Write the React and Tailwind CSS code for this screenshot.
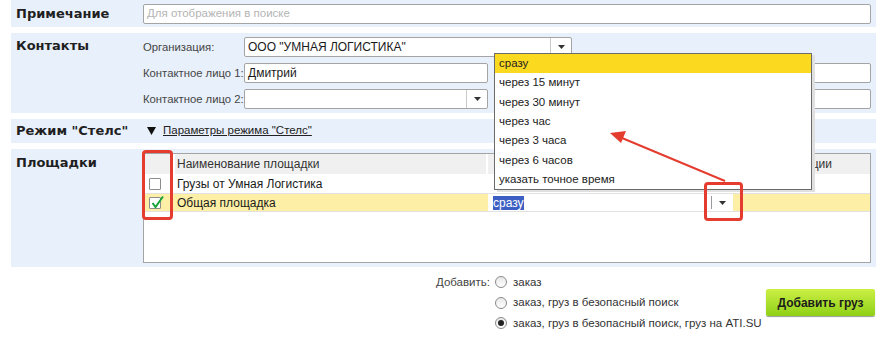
const ROW_BG = 'bg-[#e8f0fb]'

const OPTIONS = [
  'сразу',
  'через 15 минут',
  'через 30 минут',
  'через час',
  'через 3 часа',
  'через 6 часов',
  'указать точное время',
]

function Caret() {
  return (
    <svg width="7" height="4" viewBox="0 0 7 4">
      <path d="M0 0 H7 L3.5 4 Z" fill="#333" />
    </svg>
  )
}

function Field({ width, value, placeholder, combo }) {
  return (
    <div
      className="h-[20px] flex items-center border border-[#a4a4a4] rounded-[2px] bg-white text-[12px] text-[#1a1a1a]"
      style={{ width }}
    >
      <div className="flex-1 px-[3px] truncate">
        {value || <span className="text-[11.5px] text-[#b4b4b4]">{placeholder}</span>}
      </div>
      {combo && (
        <div className="w-[21px] h-[18px] border-l border-[#c9c9c9] flex items-center justify-center">
          <Caret />
        </div>
      )}
    </div>
  )
}

function Label({ children }) {
  return (
    <div className="w-[132px] pl-[5px] whitespace-nowrap font-['DejaVu_Sans',sans-serif] font-bold text-[13px] leading-[16px] text-[#1f1f1f]">
      {children}
    </div>
  )
}

function Box({ checked }) {
  return (
    <div className="relative w-[12px] h-[12px] border border-[#8d8d8d] rounded-[1px] bg-white">
      {checked && (
        <svg className="absolute -top-[3px] left-[1px]" width="13" height="14" viewBox="0 0 13 14">
          <path d="M1.5 8 L4.5 12 L12 1.5" stroke="#17a33a" strokeWidth="2" fill="none" />
        </svg>
      )}
    </div>
  )
}

function Radio({ on }) {
  return (
    <div className="w-[12px] h-[12px] rounded-full border border-[#8a8a8a] bg-linear-to-b from-[#e8e8e8] to-white flex items-center justify-center">
      {on && <div className="w-[6px] h-[6px] rounded-full bg-[#222]" />}
    </div>
  )
}

export default function App() {
  return (
    <div className="relative w-[885px] h-[339px] overflow-hidden bg-white font-['Liberation_Sans',Arial,sans-serif] text-[12px] text-[#333]">
      {/* примечание */}
      <div className={`ml-[11px] w-[865px] h-[27px] ${ROW_BG} flex items-center`}>
        <Label>Примечание</Label>
        <Field width={728} placeholder="Для отображения в поиске" />
      </div>

      {/* контакты */}
      <div className={`mt-[6px] ml-[11px] w-[865px] h-[80px] ${ROW_BG} flex items-start`}>
        <div className="pt-[5px]">
          <Label>Контакты</Label>
        </div>
        <div className="pt-[4px] flex flex-col gap-[6px]">
          <div className="flex items-center h-[20px]">
            <div className="w-[101px] whitespace-nowrap text-[11.3px] text-[#454545]">Организация:</div>
            <Field width={328} value={'ООО "УМНАЯ ЛОГИСТИКА"'} combo />
          </div>
          <div className="flex items-center h-[20px]">
            <div className="w-[101px] whitespace-nowrap text-[11.3px] text-[#454545]">Контактное лицо 1:</div>
            <Field width={244} value="Дмитрий" />
            <div className="ml-[8px]">
              <Field width={375} />
            </div>
          </div>
          <div className="flex items-center h-[20px]">
            <div className="w-[101px] whitespace-nowrap text-[11.3px] text-[#454545]">Контактное лицо 2:</div>
            <Field width={244} combo />
            <div className="ml-[8px]">
              <Field width={375} />
            </div>
          </div>
        </div>
      </div>

      {/* стелс */}
      <div className={`mt-[6px] ml-[11px] w-[865px] h-[24px] ${ROW_BG} flex items-center`}>
        <Label>Режим "Стелс"</Label>
        <div className="flex items-center gap-[7px] pl-[4px]">
          <svg width="9" height="8" viewBox="0 0 9 8">
            <path d="M0 0 H9 L4.5 8 Z" fill="#111" />
          </svg>
          <span className="underline text-[11.5px] text-[#222]">Параметры режима "Стелс"</span>
        </div>
      </div>

      {/* площадки */}
      <div className={`mt-[6px] ml-[11px] w-[865px] h-[118px] ${ROW_BG} flex items-start`}>
        <div className="pt-[6px]">
          <Label>Площадки</Label>
        </div>
        <div className="mt-[4px] w-[728px] h-[110px] border border-[#a4a4a4] bg-white text-[#1a1a1a]">
          <div className="flex h-[20px] text-[#333]">
            <div className="w-[31px] bg-[#f0f0f0] border-r-[3px] border-white" />
            <div className="w-[313px] bg-[#f0f0f0] border-r-[2px] border-white pl-[2px] flex items-center">
              Наименование площадки
            </div>
            <div className="w-[245px] bg-[#f0f0f0] border-r-[2px] border-white" />
            <div className="flex-1 bg-[#f0f0f0] pr-[38px] flex items-center justify-end">ции</div>
          </div>
          <div className="flex h-[20px] items-center border-b border-[#e2e2e2]">
            <div className="w-[31px] pl-[5px]">
              <Box />
            </div>
            <div className="pl-[2px]">Грузы от Умная Логистика</div>
          </div>
          <div className="flex h-[18px] border-b border-[#e2e2e2]">
            <div className="w-[31px] pl-[5px] bg-[#fdf0a6] flex items-center">
              <Box checked />
            </div>
            <div className="w-[313px] pl-[2px] bg-[#fdf0a6] flex items-center">Общая площадка</div>
            <div className="w-[245px] bg-white flex items-center">
              <div className="flex-1 pl-[5px]">
                <span className="bg-[#3d5fc4] text-white leading-[14px] inline-block">сразу</span>
              </div>
              <div className="w-[22px] h-[13px] border-l border-[#9a9a9a] flex items-center justify-center">
                <Caret />
              </div>
            </div>
            <div className="flex-1 bg-[#fdf0a6]" />
          </div>
        </div>
      </div>

      {/* добавить */}
      <div className="pt-[5px] flex items-center">
        <div className="flex">
          <div className="w-[490px] text-right text-[11.5px] text-[#454545] leading-[20px]">Добавить:</div>
          <div className="ml-[5px] flex flex-col">
            {[
              ['заказ', false],
              ['заказ, груз в безопасный поиск', false],
              ['заказ, груз в безопасный поиск, груз на ATI.SU', true],
            ].map(([t, on]) => (
              <div key={t} className="h-[20.5px] flex items-center gap-[6px] whitespace-nowrap text-[11.5px] text-[#333]">
                <Radio on={on} />
                <span>{t}</span>
              </div>
            ))}
          </div>
        </div>
        <button className="shrink-0 ml-auto mr-[10px] w-[109px] h-[27px] rounded-[2px] bg-linear-to-b from-[#cbf043] to-[#8fd013] shadow-[0_1px_1px_#9a9a9a] font-bold text-[12px] text-[#1c1c1c]">
          Добавить груз
        </button>
      </div>

      {/* выпадающий список */}
      <div className="absolute left-[494px] top-[53px] w-[318px] h-[137px] border border-[#6b6b6b] bg-white shadow-[3px_2px_0_#e0e0e0] text-[11.5px] text-[#222]">
        {OPTIONS.map((o, i) => (
          <div
            key={o}
            className={`h-[19.3px] pl-[4px] flex items-center ${i === 0 ? 'bg-[#fbd91f]' : ''}`}
          >
            {o}
          </div>
        ))}
      </div>

      {/* пометки */}
      <div className="absolute left-[142px] top-[150px] w-[31px] h-[70px] border-[3px] border-[#e43d30] rounded-[4px]" />
      <div className="absolute left-[704px] top-[182px] w-[39px] h-[39px] border-[3px] border-[#e43d30] rounded-[4px]" />
      <svg className="absolute left-0 top-0" width="885" height="339">
        <line x1="725" y1="181" x2="622" y2="138" stroke="#e43d30" strokeWidth="2" />
        <path d="M610 133 L626 131 L621 143 Z" fill="#e43d30" />
      </svg>
    </div>
  )
}
